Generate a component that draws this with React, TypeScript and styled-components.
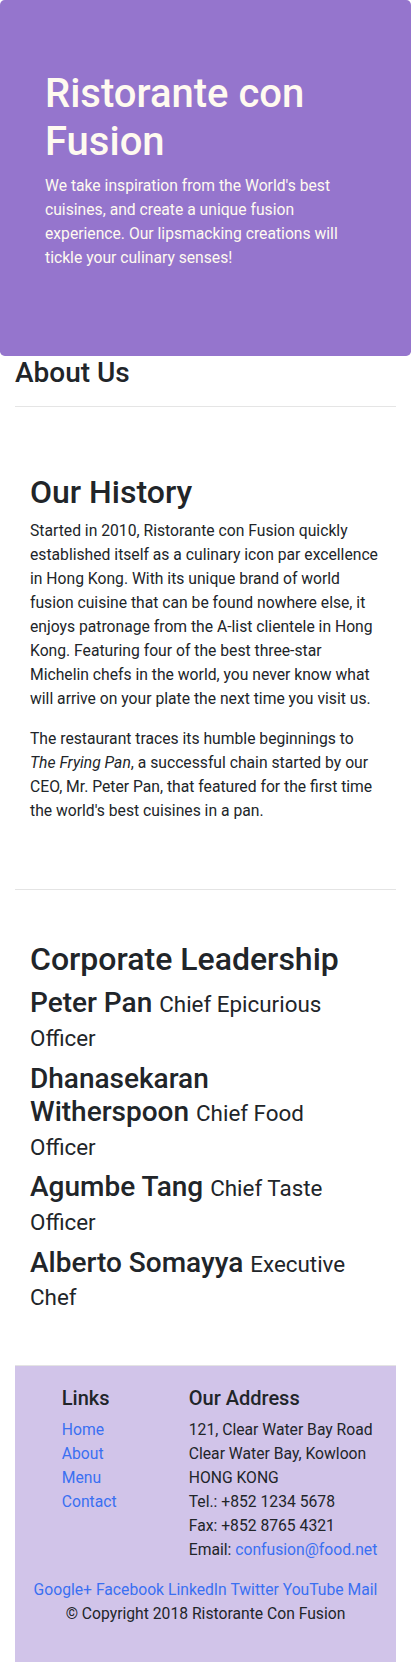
import React from "react";
import styled, { createGlobalStyle } from "styled-components";

const GlobalStyle = createGlobalStyle`
  *, *::before, *::after { box-sizing: border-box; }
  html, body { margin: 0; padding: 0; }
  body {
    font-family: Roboto, "Liberation Sans", Arial, sans-serif;
    font-size: 15.7px;
    line-height: 24px;
    color: #212529;
    background: #ffffff;
  }
`;

const Jumbotron = styled.header`
  background: #9575cd;
  color: floralwhite;
  padding: 70px 30px;
  border-radius: 4.8px;
`;

const HeaderCol = styled.div`
  padding: 0 15px;
`;

const Title = styled.h1`
  margin: 0 0 8px;
  font-size: 40px;
  font-weight: 500;
  line-height: 1.2;
`;

const Lead = styled.p`
  margin: 0 0 16px;
`;

const Container = styled.main`
  padding: 0 15px;
`;

const PageHeader = styled.div`
  padding: 0;
`;

const H3 = styled.h3`
  margin: 0 0 8px;
  font-size: 28px;
  font-weight: 500;
  line-height: 1.2;
`;

const Rule = styled.hr`
  margin: 16px 0;
  border: 0;
  border-top: 1px solid rgba(0, 0, 0, 0.1);
`;

const Section = styled.section`
  padding: 50px 15px;
  border-bottom: 1px solid #e4e4e4;
  min-height: 400px;
`;

const H2 = styled.h2`
  margin: 0 0 8px;
  font-size: 32px;
  font-weight: 500;
  line-height: 1.2;
`;

const Para = styled.p`
  margin: 0 0 16px;
`;

const LeaderList = styled.div`
  display: flex;
  flex-direction: column;
  gap: 8px;
  padding: 0 14px 2px 0;
`;

const LeaderName = styled.h3`
  margin: 0;
  font-size: 28px;
  font-weight: 500;
  line-height: 1.2;
`;

const Designation = styled.small`
  font-size: 80%;
  font-weight: 400;
`;

const Footer = styled.footer`
  background: #d1c4e9;
  padding: 20px 15px;
`;

const FooterRow = styled.div`
  display: flex;
  flex-wrap: wrap;
  justify-content: center;
  margin: 0 -15px;
`;

const FooterCol = styled.div<{ $span: number; $offset?: number }>`
  flex: 0 0 ${(p) => (p.$span / 12) * 100}%;
  max-width: ${(p) => (p.$span / 12) * 100}%;
  margin-left: ${(p) => ((p.$offset || 0) / 12) * 100}%;
  padding: 0 15px;
`;

const AutoCol = styled.div`
  flex: 0 0 auto;
  padding: 0 15px;
`;

const H5 = styled.h5`
  margin: 0 0 8px;
  font-size: 20px;
  font-weight: 500;
  line-height: 1.2;
`;

const LinkList = styled.ul`
  list-style: none;
  margin: 0 0 16px;
  padding: 0;
`;

const Link = styled.a`
  color: #3a70f2;
  text-decoration: none;
`;

const Address = styled.address`
  margin: 0 0 16px;
  font-style: normal;
`;

const Social = styled.div`
  text-align: center;
  white-space: nowrap;
`;

const Copyright = styled.p`
  margin: 0 0 16px;
`;

const leaders = [
  { name: "Peter Pan", designation: "Chief Epicurious Officer" },
  { name: "Dhanasekaran Witherspoon", designation: "Chief Food Officer" },
  { name: "Agumbe Tang", designation: "Chief Taste Officer" },
  { name: "Alberto Somayya", designation: "Executive Chef" },
];

const links = ["Home", "About", "Menu", "Contact"];
const socials = ["Google+", "Facebook", "LinkedIn", "Twitter", "YouTube", "Mail"];

export default function App() {
  return (
    <>
      <GlobalStyle />
      <Jumbotron>
        <HeaderCol>
          <Title>Ristorante con Fusion</Title>
          <Lead>
            We take inspiration from the World's best cuisines, and create a unique fusion
            experience. Our lipsmacking creations will tickle your culinary senses!
          </Lead>
        </HeaderCol>
      </Jumbotron>
      <Container>
        <PageHeader>
          <H3>About Us</H3>
          <Rule />
        </PageHeader>
        <Section>
          <H2>Our History</H2>
          <Para>
            Started in 2010, Ristorante con Fusion quickly established itself as a culinary
            icon par excellence in Hong Kong. With its unique brand of world fusion cuisine
            that can be found nowhere else, it enjoys patronage from the A-list clientele in
            Hong Kong. Featuring four of the best three-star Michelin chefs in the world, you
            never know what will arrive on your plate the next time you visit us.
          </Para>
          <Para>
            The restaurant traces its humble beginnings to <em>The Frying Pan</em>, a
            successful chain started by our CEO, Mr. Peter Pan, that featured for the first
            time the world's best cuisines in a pan.
          </Para>
        </Section>
        <Section>
          <H2>Corporate Leadership</H2>
          <LeaderList>
            {leaders.map((l) => (
              <LeaderName key={l.name}>
                {l.name} <Designation>{l.designation}</Designation>
              </LeaderName>
            ))}
          </LeaderList>
        </Section>
        <Footer>
          <FooterRow>
            <FooterCol $span={4} $offset={1}>
              <H5>Links</H5>
              <LinkList>
                {links.map((t) => (
                  <li key={t}>
                    <Link href="#">{t}</Link>
                  </li>
                ))}
              </LinkList>
            </FooterCol>
            <FooterCol $span={7}>
              <H5>Our Address</H5>
              <Address>
                121, Clear Water Bay Road
                <br />
                Clear Water Bay, Kowloon
                <br />
                HONG KONG
                <br />
                Tel.: +852 1234 5678
                <br />
                Fax: +852 8765 4321
                <br />
                Email: <Link href="#">confusion@food.net</Link>
              </Address>
            </FooterCol>
            <FooterCol $span={12}>
              <Social>
                {socials.map((s, i) => (
                  <React.Fragment key={s}>
                    {i > 0 ? " " : ""}
                    <Link href="#">{s}</Link>
                  </React.Fragment>
                ))}
              </Social>
            </FooterCol>
          </FooterRow>
          <FooterRow>
            <AutoCol>
              <Copyright>© Copyright 2018 Ristorante Con Fusion</Copyright>
            </AutoCol>
          </FooterRow>
        </Footer>
      </Container>
    </>
  );
}
